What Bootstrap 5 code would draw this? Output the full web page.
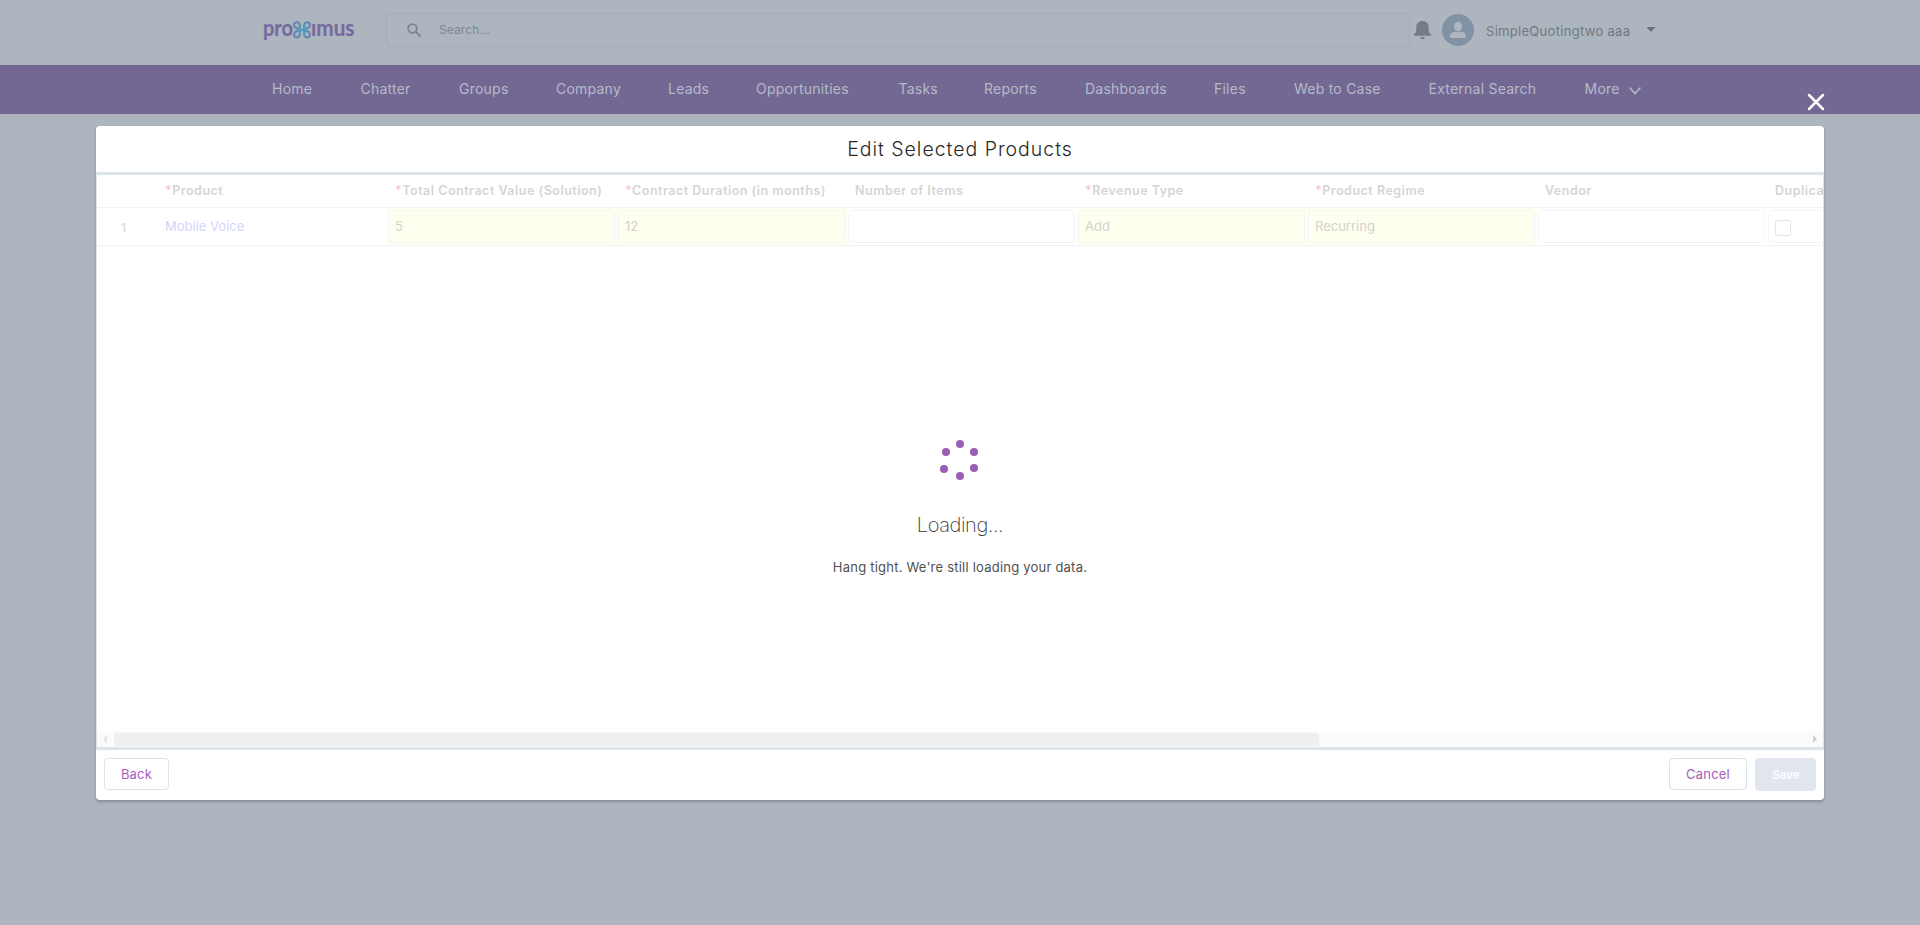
<!DOCTYPE html>
<html lang="en">
<head>
<meta charset="utf-8">
<meta name="viewport" content="width=device-width, initial-scale=1">
<title>Edit Selected Products</title>
<link href="https://cdn.jsdelivr.net/npm/bootstrap@5.3.0/dist/css/bootstrap.min.css" rel="stylesheet">
<style>
body{font-family:Inter,"Work Sans",Roboto,sans-serif;font-size:13px;line-height:20px;background:#adb5bf;color:#3e3e3c;height:925px;overflow:hidden}
.topbar{height:65px;padding-left:263px}
.brand{overflow:visible;margin-top:-5px}
.searchbox{width:1024px;height:34px;margin:-5px 0 0 31px;border:1px solid #a4acb6;border-radius:4px;padding-left:20px;color:#7e8792;font-size:12px;letter-spacing:.1px}
.searchbox svg{margin-right:18px}
.account{height:34px;margin-top:-5px;padding-left:3px}
.avatar{width:32px;height:32px;background:#8092a4;margin-left:10px}
.user-name{color:#717983;margin-left:12px;width:154px;font-size:13px;letter-spacing:.3px;padding-top:1px}
.mainnav{height:49px;background:#736894;padding-left:248px;display:grid;grid-template-columns:88.5px 98.5px 97px 112px 88px 142.5px 85.5px 101px 129px 80px 134.5px 156px 110px;color:#b5bac8;font-size:14px;letter-spacing:.23px}
.mainnav a{color:inherit;text-decoration:none;padding:0 0 0 24px;height:48px;display:flex;align-items:center;white-space:nowrap}
.dialog{position:absolute;left:96px;top:126px;width:1728px;height:674px;border-radius:4px;background:#fff;box-shadow:0 2px 3px rgba(0,0,0,.22)}
.dismiss{position:absolute;left:1806px;top:92px}
.dialog-head{height:49px;border-bottom:3px solid #dde4e7;font-size:19.5px;font-weight:300;color:#2b2826;letter-spacing:.98px;margin:0;padding-top:1px}
.dialog-main{height:572px;border:solid #dde4e7;border-width:0 1px;overflow:hidden;position:relative}
.line{display:grid;grid-template-columns:60px 230px 230px 230px 230px 230px 230px 230px 230px;width:1900px}
.heads{height:33px;border-bottom:1px solid #f3f3f5;font-weight:600;font-size:12.5px;letter-spacing:.5px;color:#d6d5d5;padding-bottom:2px}
.heads>div{padding-left:8px;line-height:32px;white-space:nowrap}
.heads i{font-style:normal;color:#f6cccc}
.values{height:38px;border-bottom:1px solid #f3f3f5;color:#d3d3cc}
.values>div{padding:2px 2px 2px 1px}
.edited{background:#feffee}
.field{border:1px solid #f5f5f9;border-radius:4px;height:33px;padding:0 6px;line-height:31px;width:227px}
.tick{width:16px;height:16px;border:1px solid #e3e3e3;border-radius:2px;margin-top:9px}
.loading{position:absolute;left:0;right:0;top:261px}
.loading h2{font-size:20px;font-weight:200;line-height:26px;margin:32px 0 0;letter-spacing:-.4px;color:#333}
.loading p{margin:19px 0 0;letter-spacing:.22px;color:#505050}
.hscroll{position:absolute;left:0;right:0;bottom:0;height:16px;background:#fbfbfb}
.thumb{width:1205px;height:13px;margin-left:6px;background:#efefef}
.dialog-foot{height:53px;border-top:3px solid #dde4e7;padding:8px}
.act{--bs-btn-font-size:13px;--bs-btn-line-height:29px;--bs-btn-padding-y:0;--bs-btn-padding-x:0;--bs-btn-border-radius:4px;--bs-btn-color:#a560bb;--bs-btn-border-color:#dde4e7;--bs-btn-bg:#fff;letter-spacing:.2px;height:32px}
.act-back{width:65px}
.act-cancel{width:78px}
.act-save{--bs-btn-disabled-bg:#e0e5ee;--bs-btn-disabled-color:#fafcff;--bs-btn-disabled-border-color:#e0e5ee;--bs-btn-disabled-opacity:1;width:61px;height:33px;font:600 12px/32px "Liberation Sans",Arial,sans-serif;letter-spacing:-.2px}
</style>
</head>
<body>
<header class="topbar d-flex align-items-center">
  <svg width="92" height="30" viewBox="0 0 92 30" class="brand flex-shrink-0" role="img" aria-label="proximus">
    <g font-family="Lato,sans-serif" font-weight="700" font-size="23.500" fill="#766a9f" stroke="#766a9f" stroke-width=".2">
      <text x="0" y="21" textLength="30" lengthAdjust="spacingAndGlyphs">pro</text>
      <text x="48" y="21" textLength="43.500" lengthAdjust="spacingAndGlyphs">ımus</text>
    </g>
    <g fill="none" stroke-width="2.200" stroke-linecap="round">
      <path stroke="#6b86b3" d="M36.800 13.800C33.500 14 31 12 31 9.800C31 6.600 36.500 6 36.800 10.500V19C36.500 23.800 31 23 31 19.800C31 17.300 33.500 15.500 36.800 15.800"/>
      <path stroke="#6b86b3" d="M41.200 13.800C44.500 14 47 12 47 9.800C47 6.600 41.500 6 41.200 10.500V19C41.500 23.800 47 23 47 19.800C47 17.300 44.500 15.500 41.200 15.800"/>
      <path stroke="#4ba0bb" d="M36.900 10.500V19.300M41.100 10.500V19.300M35.500 14.800h7"/>
    </g>
  </svg>
  <div class="searchbox d-flex align-items-center">
    <svg width="14" height="14" viewBox="0 0 14 14" fill="none" stroke="#7a828c" stroke-width="1.800"><circle cx="5.500" cy="5.500" r="4.300"/><path d="M8.700 8.700l4.300 4.300" stroke-linecap="round"/></svg>
    <span>Search...</span>
  </div>
  <div class="account d-flex align-items-center">
    <svg width="19" height="20" viewBox="0 0 19 20" fill="#747c86"><path d="M9.500 1C5.800 1 3.300 3.500 3.300 7v3.500c0 1.800-.8 2.500-2 3.500-.8.600-.6 1.700.4 1.700h15.600c1 0 1.200-1.100.4-1.700-1.200-1-2-1.700-2-3.500V7c0-3.500-2.500-6-6.200-6zM7.300 17.300h4.400c0 1.200-1 2-2.200 2s-2.200-.8-2.200-2z"/></svg>
    <span class="avatar rounded-circle d-flex align-items-center justify-content-center"><svg width="18" height="18" viewBox="0 0 18 18" fill="#aeb7c1"><ellipse cx="9" cy="5.500" rx="4" ry="4.700"/><path d="M1 15.500c0-3 2.500-4.500 5.500-5 1.500 1 3.500 1 5 0 3 .5 5.500 2 5.500 5 0 1-.6 1.500-1.500 1.500h-13C1.600 17 1 16.500 1 15.500z"/></svg></span>
    <span class="user-name text-nowrap">SimpleQuotingtwo aaa</span>
    <svg width="10" height="6" viewBox="0 0 10 6" fill="#68707a" style="margin-left:6px"><path d="M.5 0h9L5 5z"/></svg>
  </div>
</header>
<nav class="mainnav">
  <a href="#">Home</a><a href="#">Chatter</a><a href="#">Groups</a><a href="#">Company</a><a href="#">Leads</a><a href="#">Opportunities</a><a href="#">Tasks</a><a href="#">Reports</a><a href="#">Dashboards</a><a href="#">Files</a><a href="#">Web to Case</a><a href="#">External Search</a>
  <a href="#">More<svg class="mt-1" style="margin-left:9px" width="12" height="8" viewBox="0 0 12 8" fill="none" stroke="#b5bac8" stroke-width="1.600" stroke-linecap="round"><path d="M1 1l5 5.500L11 1"/></svg></a>
</nav>

<svg class="dismiss" width="20" height="20" viewBox="0 0 20 20" fill="none" stroke="#fff" stroke-width="2.500" stroke-linecap="round"><path d="M3 3l14 14M17 3L3 17"/></svg>
<section class="dialog">
  <h1 class="dialog-head d-flex align-items-center justify-content-center">Edit Selected Products</h1>
  <div class="dialog-main">
    <div class="line heads"><div></div><div><i>*</i>Product</div><div><i>*</i>Total Contract Value (Solution)</div><div><i>*</i>Contract Duration (in months)</div><div>Number of Items</div><div><i>*</i>Revenue Type</div><div><i>*</i>Product Regime</div><div>Vendor</div><div>Duplicate</div></div>
    <div class="line values">
      <div style="padding:10px 0 0 24px;font-size:12px">1</div>
      <div style="padding:8px 8px;color:#d5d5fb">Mobile Voice</div>
      <div class="edited"><div class="field">5</div></div>
      <div class="edited"><div class="field">12</div></div>
      <div><div class="field"></div></div>
      <div class="edited"><div class="field">Add</div></div>
      <div class="edited"><div class="field">Recurring</div></div>
      <div><div class="field"></div></div>
      <div><div class="field"><div class="tick"></div></div></div>
    </div>
    <div class="loading text-center">
      <svg width="42" height="44" viewBox="0 0 42 44" fill="#9b5db3" class="d-block mx-auto"><circle cx="21" cy="8" r="4"/><circle cx="35" cy="16" r="4"/><circle cx="35" cy="32" r="4"/><circle cx="21" cy="40" r="4"/><circle cx="5" cy="33" r="4"/><circle cx="7" cy="16" r="4"/></svg>
      <h2>Loading...</h2>
      <p>Hang tight. We're still loading your data.</p>
    </div>
    <div class="hscroll d-flex align-items-center">
      <svg class="ms-1" width="7" height="8" viewBox="0 0 7 8" fill="#e3e3e3"><path d="M6 0v8L2 4z"/></svg>
      <div class="thumb"></div>
      <svg class="ms-auto" style="margin-right:5px" width="5" height="8" viewBox="0 0 5 8" fill="#cfcfcf"><path d="M0 0v8l4-4z"/></svg>
    </div>
  </div>
  <footer class="dialog-foot d-flex align-items-start">
    <button class="btn act act-back">Back</button>
    <button class="btn act act-cancel ms-auto me-2">Cancel</button>
    <button class="btn act act-save" disabled>Save</button>
  </footer>
</section>
</body>
</html>
